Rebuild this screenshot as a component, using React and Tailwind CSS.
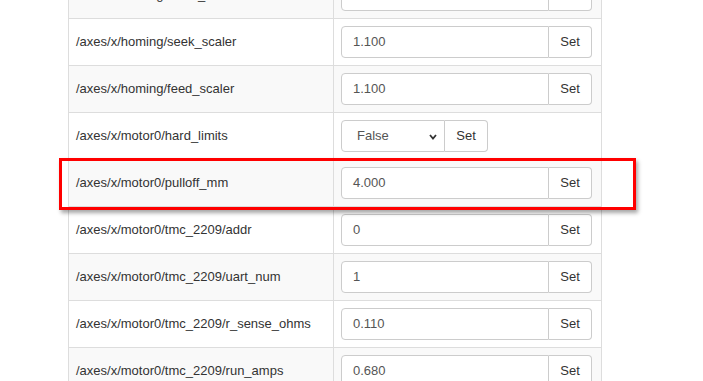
const rows = [
  { path: '/axes/x/homing/settle_ms', value: '250' },
  { path: '/axes/x/homing/seek_scaler', value: '1.100' },
  { path: '/axes/x/homing/feed_scaler', value: '1.100' },
  { path: '/axes/x/motor0/hard_limits', value: 'False', select: true },
  { path: '/axes/x/motor0/pulloff_mm', value: '4.000' },
  { path: '/axes/x/motor0/tmc_2209/addr', value: '0' },
  { path: '/axes/x/motor0/tmc_2209/uart_num', value: '1' },
  { path: '/axes/x/motor0/tmc_2209/r_sense_ohms', value: '0.110' },
  { path: '/axes/x/motor0/tmc_2209/run_amps', value: '0.680' },
];

function SetButton() {
  return (
    <button className="w-[43px] h-full border border-l-0 border-[#ccc] rounded-r-[4px] bg-white text-[13px] text-[#333]">
      Set
    </button>
  );
}

function ValueCell({ row }) {
  if (row.select) {
    return (
      <div className="flex h-[32px]">
        <div className="relative w-[104px] h-full border border-[#ccc] rounded-l-[4px] bg-white flex items-center">
          <span className="pl-[15px] text-[13px] text-[#555]">{row.value}</span>
          <svg className="absolute right-[7px] top-[13px]" width="8" height="6" viewBox="0 0 8 6">
            <polyline points="1,1 4,4.5 7,1" fill="none" stroke="#333" strokeWidth="1.8" />
          </svg>
        </div>
        <SetButton />
      </div>
    );
  }
  return (
    <div className="flex h-[32px] w-[251px]">
      <div className="flex-1 h-full border border-[#ccc] rounded-l-[4px] bg-white flex items-center pl-[11px] text-[13px] text-[#555]">
        {row.value}
      </div>
      <SetButton />
    </div>
  );
}

export default function App() {
  return (
    <div className="relative h-[381px] w-[703px] overflow-hidden bg-white font-['Liberation_Sans',Arial,sans-serif]">
      <div className="ml-[68px] mt-[-28px] w-[534px] border-l border-r border-[#ddd]">
        {rows.map((row, i) => (
          <div
            key={row.path}
            className={`flex h-[47px] border-b border-[#ddd] ${i % 2 === 0 ? 'bg-[#f9f9f9]' : 'bg-white'}`}
          >
            <div className="w-[265px] border-r border-[#ddd] pl-[7px] flex items-center text-[13px] text-[#333]">
              {row.path}
            </div>
            <div className="flex-1 pl-[7px] flex items-center">
              <ValueCell row={row} />
            </div>
          </div>
        ))}
      </div>
      <div className="absolute left-[59px] top-[158px] w-[577px] h-[52px] border-[3px] border-[#f00] shadow-[2px_3px_4px_rgba(0,0,0,0.35)]" />
    </div>
  );
}
